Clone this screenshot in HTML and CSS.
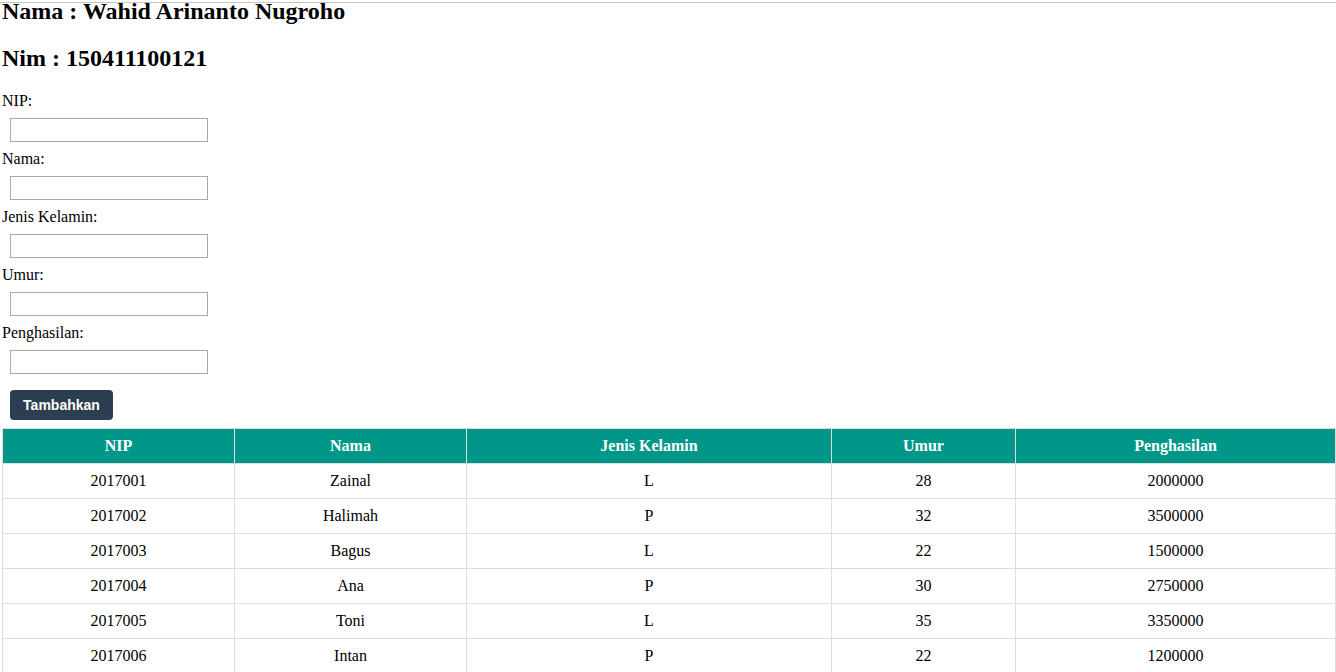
FILE: index.html
```html
<!DOCTYPE html>
<html>
<head>
<meta charset="utf-8">
<title>Data Pegawai</title>
<link rel="stylesheet" href="styles.css">
</head>
<body>
<div class="topline"></div>
<h2 class="title first">Nama : Wahid Arinanto Nugroho</h2>
<h2 class="title">Nim : 150411100121</h2>
<form class="form">
  <label class="label">NIP:</label>
  <input class="field" type="text">
  <label class="label">Nama:</label>
  <input class="field" type="text">
  <label class="label">Jenis Kelamin:</label>
  <input class="field" type="text">
  <label class="label">Umur:</label>
  <input class="field" type="text">
  <label class="label">Penghasilan:</label>
  <input class="field" type="text">
  <button class="btn" type="button">Tambahkan</button>
</form>
<table class="data">
  <colgroup>
    <col class="c1"><col class="c2"><col class="c3"><col class="c4"><col class="c5">
  </colgroup>
  <thead>
    <tr><th>NIP</th><th>Nama</th><th>Jenis Kelamin</th><th>Umur</th><th>Penghasilan</th></tr>
  </thead>
  <tbody>
    <tr><td>2017001</td><td>Zainal</td><td>L</td><td>28</td><td>2000000</td></tr>
    <tr><td>2017002</td><td>Halimah</td><td>P</td><td>32</td><td>3500000</td></tr>
    <tr><td>2017003</td><td>Bagus</td><td>L</td><td>22</td><td>1500000</td></tr>
    <tr><td>2017004</td><td>Ana</td><td>P</td><td>30</td><td>2750000</td></tr>
    <tr><td>2017005</td><td>Toni</td><td>L</td><td>35</td><td>3350000</td></tr>
    <tr><td>2017006</td><td>Intan</td><td>P</td><td>22</td><td>1200000</td></tr>
  </tbody>
</table>
</body>
</html>
```
FILE: styles.css
```css
html, body {
  margin: 0;
  background: #ffffff;
}
body {
  padding: 0 1px 0 2px;
  font-family: "Liberation Serif", "Times New Roman", serif;
  font-size: 16px;
  color: #000000;
}
.topline {
  position: absolute;
  top: 2px;
  left: 0;
  right: 0;
  height: 1px;
  background: #c6c6c6;
}
.title {
  font-size: 24px;
  font-weight: bold;
  line-height: 28px;
  margin: 0 0 20px;
}
.title.first {
  margin: -3px 0 19px;
}
.form {
  margin: 0;
}
.label {
  display: block;
  line-height: 18px;
}
.field {
  display: block;
  box-sizing: border-box;
  width: 198px;
  height: 24px;
  margin: 8px 0 8px 8px;
  padding: 1px 2px;
  border: 1px solid #a9a9a9;
  border-radius: 0;
  background: #ffffff;
  font-family: "Liberation Sans", Arial, sans-serif;
  font-size: 13px;
}
.btn {
  display: block;
  box-sizing: border-box;
  height: 30px;
  width: 103px;
  margin: 16px 0 8px 8px;
  padding: 0;
  border: none;
  border-radius: 4px;
  background: #2c3e50;
  color: #ffffff;
  font-family: "Liberation Sans", Arial, sans-serif;
  font-weight: bold;
  font-size: 14px;
}
.data {
  width: 100%;
  border-collapse: collapse;
  table-layout: fixed;
}
.c1 { width: 232px; }
.c2 { width: 232px; }
.c3 { width: 365px; }
.c4 { width: 184px; }
.c5 { width: 320px; }
.data th,
.data td {
  border: 1px solid #dddddd;
  padding: 8px;
  line-height: 18px;
  text-align: center;
  font-size: 16px;
}
.data th {
  background: #009688;
  color: #ffffff;
  font-weight: bold;
}
```
